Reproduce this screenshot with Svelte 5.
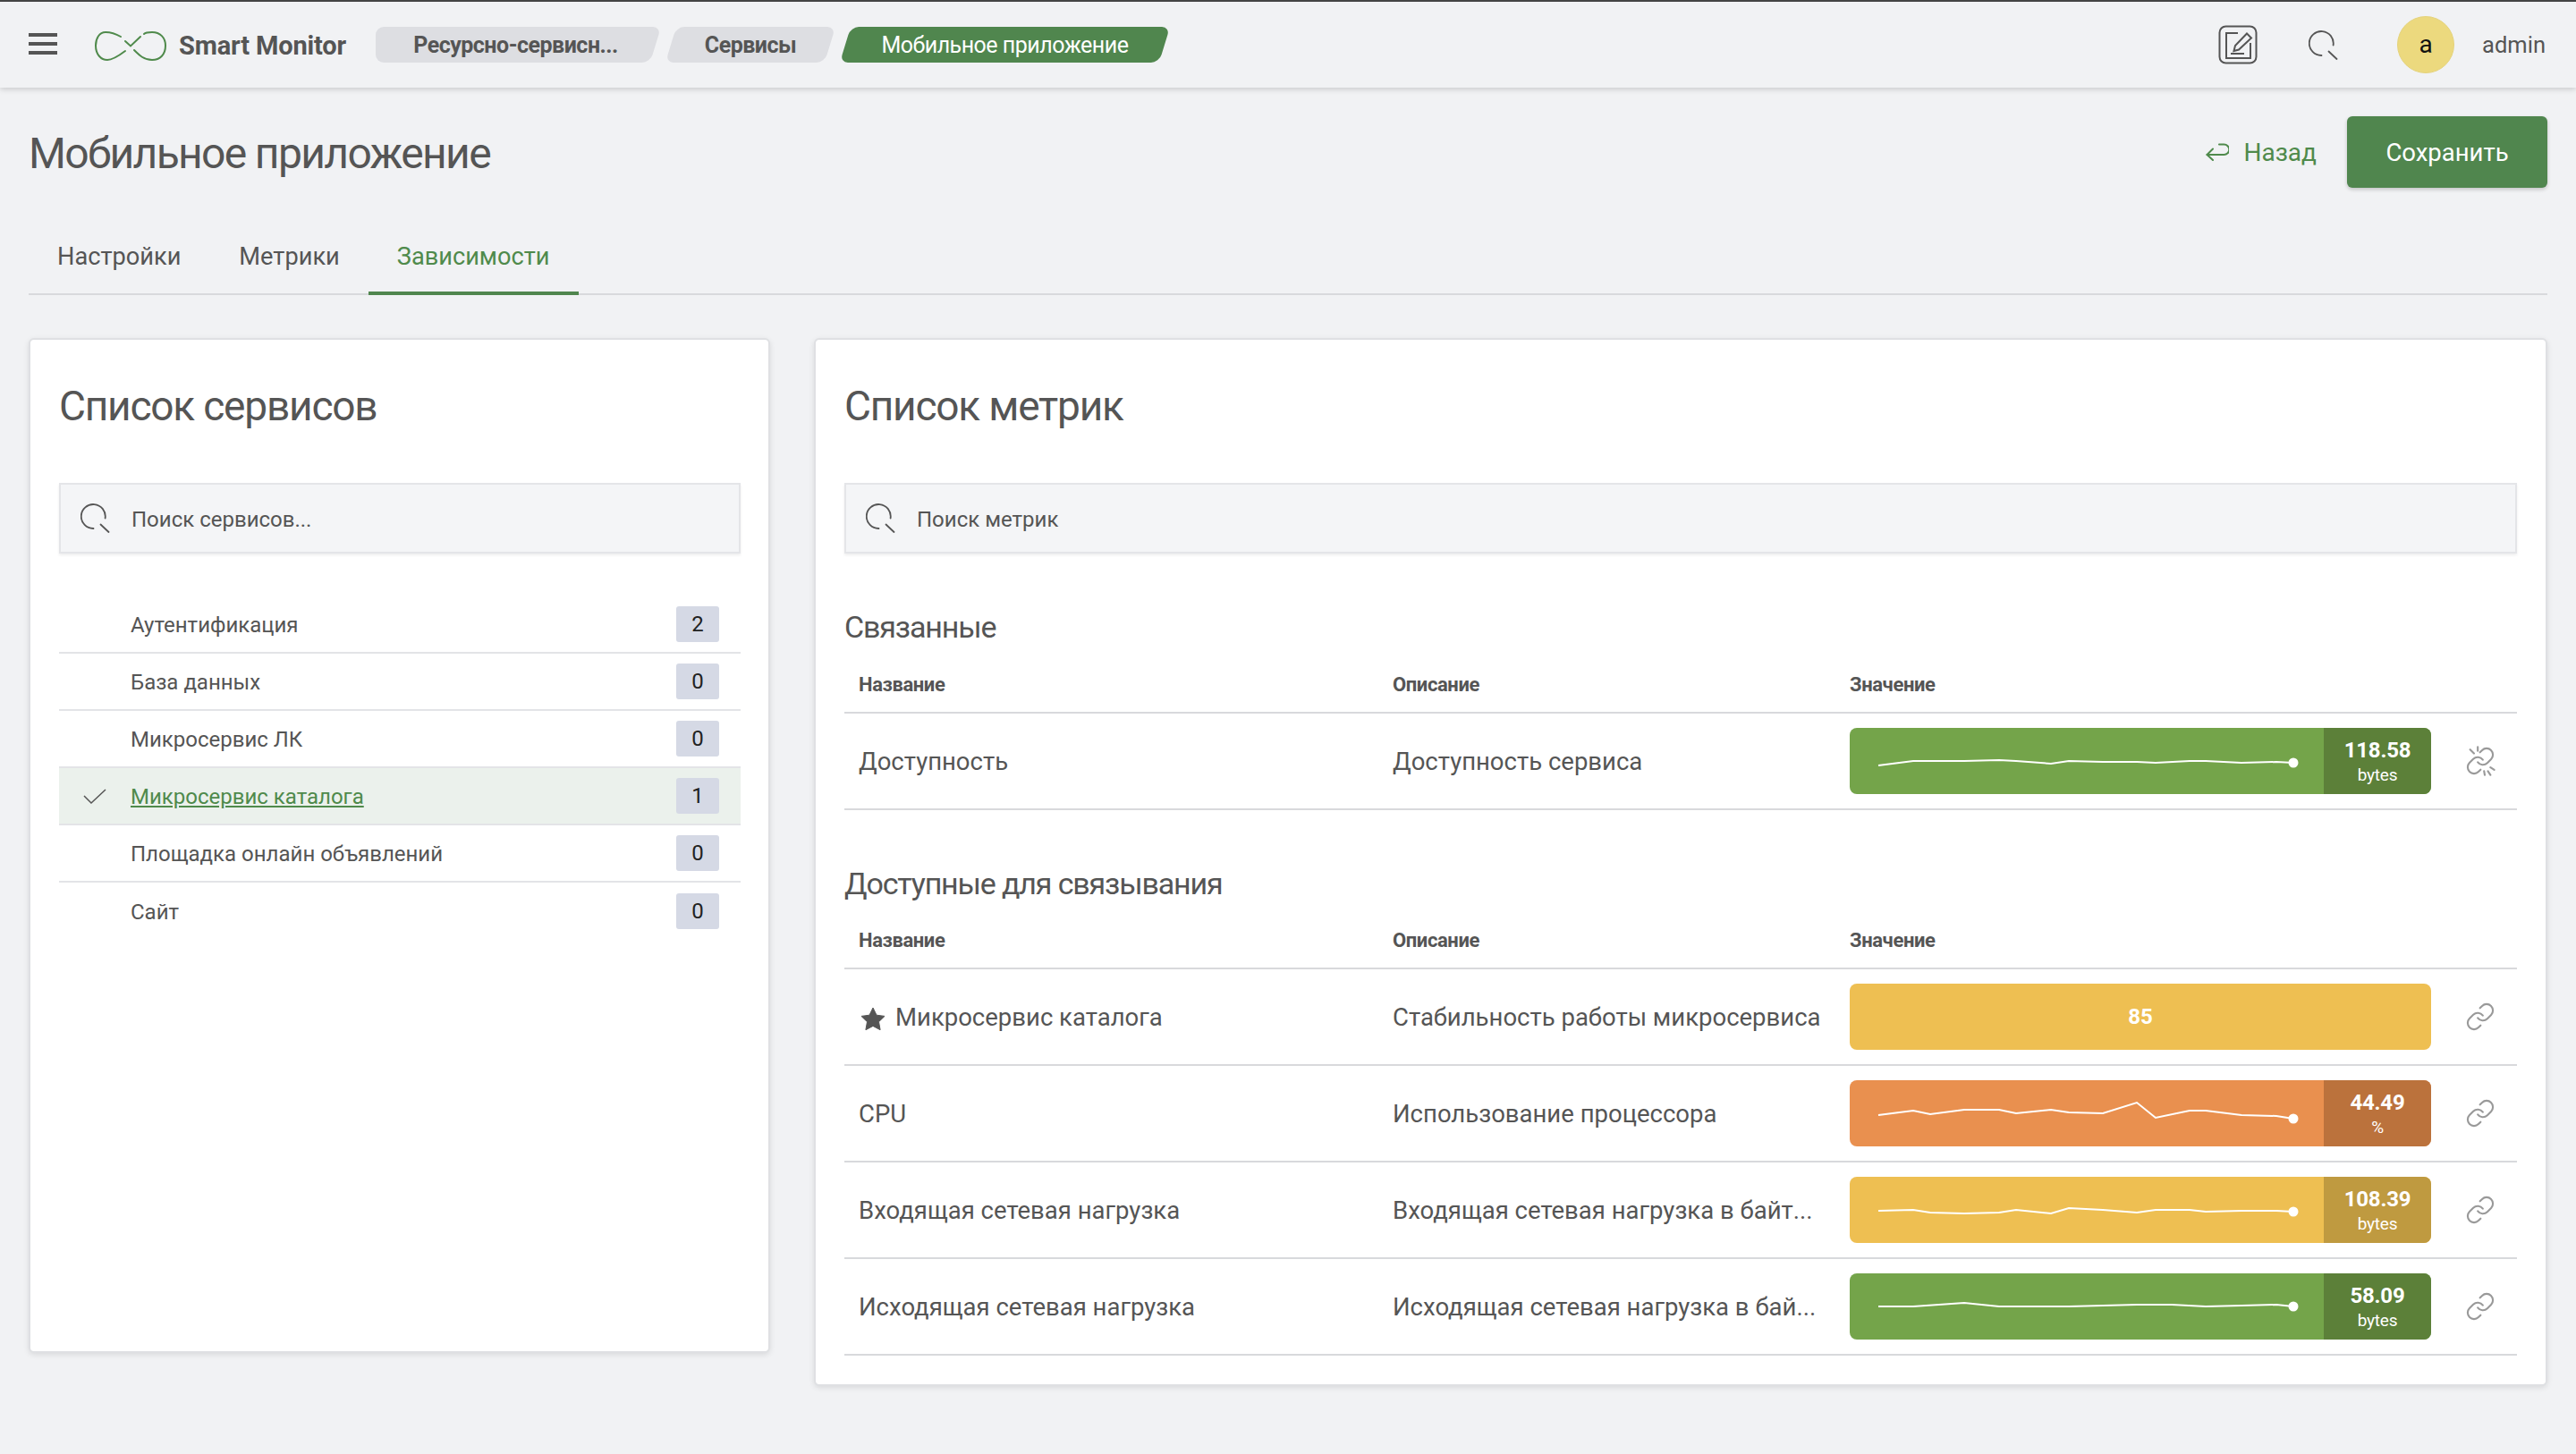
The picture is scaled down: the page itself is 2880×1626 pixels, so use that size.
<script>
  const services = [
    { name: 'Аутентификация', count: 2 },
    { name: 'База данных', count: 0 },
    { name: 'Микросервис ЛК', count: 0 },
    { name: 'Микросервис каталога', count: 1, active: true },
    { name: 'Площадка онлайн объявлений', count: 0 },
    { name: 'Сайт', count: 0 },
  ];

  // sparkline samples, measured in px from the bar's top-left corner
  const spark = (pts) => pts.map(([x, y]) => [x - 2068, y]);

  const linked = [
    {
      name: 'Доступность',
      desc: 'Доступность сервиса',
      tone: 'green',
      value: '118.58',
      unit: 'bytes',
      line: spark([[2100, 42], [2139, 37], [2158, 37], [2196, 37], [2235, 36], [2254, 37], [2293, 40], [2313, 37], [2351, 38], [2389, 38], [2410, 39], [2448, 37], [2466, 37], [2506, 39], [2545, 38], [2564, 39]]),
    },
  ];

  const available = [
    { name: 'Микросервис каталога', star: true, desc: 'Стабильность работы микросервиса', tone: 'yellow', value: '85' },
    {
      name: 'CPU',
      desc: 'Использование процессора',
      tone: 'orange',
      value: '44.49',
      unit: '%',
      line: spark([[2100, 39], [2139, 34], [2158, 38], [2196, 33], [2235, 33], [2254, 37], [2293, 33], [2313, 36], [2351, 37], [2389, 25], [2410, 42], [2448, 34], [2466, 34], [2506, 39], [2545, 40], [2564, 43]]),
    },
    {
      name: 'Входящая сетевая нагрузка',
      desc: 'Входящая сетевая нагрузка в байт...',
      tone: 'yellow',
      value: '108.39',
      unit: 'bytes',
      line: spark([[2100, 38], [2139, 37], [2158, 40], [2196, 41], [2235, 40], [2254, 37], [2293, 41], [2313, 35], [2351, 37], [2389, 40], [2410, 37], [2448, 37], [2466, 39], [2506, 38], [2545, 38], [2564, 39]]),
    },
    {
      name: 'Исходящая сетевая нагрузка',
      desc: 'Исходящая сетевая нагрузка в бай...',
      tone: 'green',
      value: '58.09',
      unit: 'bytes',
      line: spark([[2100, 37], [2139, 37], [2196, 33], [2235, 37], [2313, 37], [2389, 35], [2428, 35], [2466, 37], [2506, 36], [2545, 35], [2564, 37]]),
    },
  ];

  const points = (line) => line.map((p) => p.join(',')).join(' ');
</script>

{#snippet searchIcon(size)}
  <svg class="search-icon" width={size} height={size} viewBox="0 0 33 33" fill="none" stroke="#555" stroke-width="1.8" stroke-linecap="round">
    <path d="M27.6 16.5A13.5 13.5 0 1 0 14.5 28" />
    <path d="M22.5 23.5L31.5 32" />
  </svg>
{/snippet}

{#snippet linkIcon(broken)}
  <svg class="link-icon" width="34" height="34" viewBox="0 0 24 24" fill="none" stroke="#999" stroke-width="1.5" stroke-linecap="round" stroke-linejoin="round">
    <path d="M10 13a5 5 0 0 0 7.54.54l3-3a5 5 0 0 0-7.07-7.07l-1.72 1.71" />
    <path d="M14 11a5 5 0 0 0-7.54-.54l-3 3a5 5 0 0 0 7.07 7.07l1.71-1.71" />
    {#if broken}
      <path d="M4 3l3 3M10 1v3M20 17l3 2M15 20l.5 3M18 20l2 3" />
    {/if}
  </svg>
{/snippet}

{#snippet metricTable(rows, broken)}
  <div class="row head">
    <span>Название</span>
    <span>Описание</span>
    <span>Значение</span>
  </div>
  {#each rows as row}
    <div class="row">
      <span class="name">
        {#if row.star}
          <svg class="star" width="28" height="26" viewBox="0 0 28 26"><path d="M14 1l4 8.2 9 1.2-6.5 6.3 1.6 9L14 21.4 5.9 25.7l1.6-9L1 10.4l9-1.2z" fill="#555" stroke="#555" stroke-linejoin="round" /></svg>
        {/if}
        {row.name}
      </span>
      <span class="desc">{row.desc}</span>
      <div class="bar" data-tone={row.tone}>
        {#if row.line}
          <svg class="spark" viewBox="0 0 530 74" width="530" height="74">
            <polyline points={points(row.line)} fill="none" stroke="#fff" stroke-width="2" />
            <circle cx={row.line[row.line.length - 1][0]} cy={row.line[row.line.length - 1][1]} r="5.5" fill="#fff" />
          </svg>
          <div class="reading">
            <strong>{row.value}</strong>
            <small>{row.unit}</small>
          </div>
        {:else}
          <strong class="solo">{row.value}</strong>
        {/if}
      </div>
      <span class="action">{@render linkIcon(broken)}</span>
    </div>
  {/each}
{/snippet}

<header class="topbar">
  <button class="burger" aria-label="Меню"><i></i><i></i><i></i></button>
  <svg class="logo" width="80" height="34" viewBox="0 0 80 34" fill="none" stroke="#4f8a4b" stroke-width="2" stroke-linecap="round">
    <path d="M29 6C22 2 16 1 12 1 5 1 1 8 1 16c0 10 6 16 13 16 6 0 12-4 20-10" />
    <path d="M44 21c6 6 11 11 20 11 9 0 15-6 15-16 0-9-6-15-15-15-4 0-8 1-9 2" />
    <path d="M34 11l6 5.500L51 6" />
  </svg>
  <b class="brand">Smart Monitor</b>
  <nav class="crumbs">
    <a class="crumb first" href="#a">Ресурсно-сервисн...</a>
    <a class="crumb second" href="#b">Сервисы</a>
    <a class="crumb third current" href="#c">Мобильное приложение</a>
  </nav>
  <div class="top-actions">
    <svg width="44" height="44" viewBox="0 0 44 44" fill="none" stroke="#555" stroke-width="2">
      <rect x="1.500" y="1.500" width="41" height="41" rx="7" />
      <path d="M22 9H9v28h27V20" />
      <path d="M17.500 29l1.500-6L32 9.500l5 5L23 27.500z" />
      <path d="M14 32h15" />
    </svg>
    <span class="top-search">{@render searchIcon(33)}</span>
    <span class="avatar">a</span>
    <span class="user">admin</span>
  </div>
</header>

<main class="page">
  <div class="title-row">
    <h1>Мобильное приложение</h1>
    <a class="back" href="#back">
      <svg width="26" height="20" viewBox="0 0 26 20" fill="none" stroke="#4f8a4b" stroke-width="2" stroke-linecap="round" stroke-linejoin="round">
        <path d="M15 1.500h5.500a4.500 4.500 0 0 1 0 11.500H1.500" />
        <path d="M8 6.500L1.500 13 8 19" />
      </svg>
      Назад
    </a>
    <button class="save">Сохранить</button>
  </div>

  <div class="tabs">
    <span class="tab">Настройки</span>
    <span class="tab">Метрики</span>
    <span class="tab active">Зависимости</span>
  </div>

  <div class="columns">
    <section class="panel services">
      <h2>Список сервисов</h2>
      <div class="search">{@render searchIcon(33)}<span>Поиск сервисов...</span></div>
      <ul class="service-list">
        {#each services as service}
          <li class:active={service.active}>
            {#if service.active}
              <svg class="check" width="26" height="18" viewBox="0 0 26 18" fill="none" stroke="#555" stroke-width="1.500"><path d="M1 8l8 8L25 1" /></svg>
            {/if}
            <span>{service.name}</span>
            <em>{service.count}</em>
          </li>
        {/each}
      </ul>
    </section>

    <section class="panel metrics">
      <h2>Список метрик</h2>
      <div class="search">{@render searchIcon(33)}<span>Поиск метрик</span></div>
      <h3 class="first-group">Связанные</h3>
      {@render metricTable(linked, true)}
      <h3 class="second-group">Доступные для связывания</h3>
      {@render metricTable(available, false)}
    </section>
  </div>
</main>

<style>
  :global(body) {
    margin: 0;
    min-height: 100vh;
    background: #f1f2f4;
    color: #555;
    font-family: Roboto, 'Liberation Sans', sans-serif;
  }

  .topbar {
    height: 96px;
    box-sizing: content-box;
    border-top: 2px solid #444;
    display: flex;
    align-items: center;
    padding: 0 32px;
    background: #f1f2f4;
    box-shadow: 0 2px 6px rgba(0, 0, 0, 0.16);
    position: relative;
  }

  .burger {
    width: 32px;
    height: 24px;
    padding: 0;
    margin: -2px 42px 0 0;
    border: 0;
    background: none;
    display: flex;
    flex-direction: column;
    justify-content: space-between;
  }

  .burger i {
    height: 4px;
    background: #555;
  }

  .logo {
    margin-top: 4px;
    flex: none;
  }

  .brand {
    margin: 2px 0 0 14px;
    width: 220px;
    font-size: 29px;
    letter-spacing: -0.15px;
    white-space: nowrap;
  }

  .crumbs {
    display: flex;
    gap: 17px;
  }

  .crumb {
    position: relative;
    z-index: 0;
    height: 40px;
    line-height: 42px;
    font-size: 25px;
    font-weight: 700;
    letter-spacing: -0.5px;
    color: #555;
    text-decoration: none;
    text-align: center;
    white-space: nowrap;
  }

  .crumb::before {
    content: '';
    position: absolute;
    inset: 0;
    z-index: -1;
    background: #dddee2;
    border-radius: 9px;
    transform: skewX(-17deg);
  }

  .crumb.first {
    width: 313px;
  }

  .crumb.first::before {
    left: 20px;
  }

  .crumb.first::after {
    content: '';
    position: absolute;
    inset: 0 50% 0 0;
    z-index: -1;
    background: #dddee2;
    border-radius: 9px 0 0 9px;
  }

  .crumb.second {
    width: 178px;
  }

  .crumb.third {
    width: 357px;
    font-weight: 400;
    color: #fff;
  }

  .current::before {
    background: #50864e;
  }

  .top-actions {
    margin-left: auto;
    display: flex;
    align-items: center;
  }

  .top-search {
    display: flex;
    margin-left: 57px;
  }

  .avatar {
    width: 62px;
    height: 62px;
    margin-left: 66px;
    border: 1px solid #e5d37c;
    border-radius: 50%;
    background: #ecd97e;
    color: #111;
    font-size: 28px;
    line-height: 62px;
    text-align: center;
  }

  .user {
    margin: 0 2px 0 31px;
    font-size: 25.5px;
  }

  .page {
    padding: 32px 32px 0;
  }

  .title-row {
    display: flex;
    align-items: center;
    height: 80px;
  }

  h1 {
    margin: 0 auto 0 0;
    padding-top: 2px;
    font-size: 48px;
    font-weight: 400;
    letter-spacing: -1.65px;
  }

  .back {
    display: flex;
    align-items: center;
    gap: 16px;
    margin-right: 34px;
    font-size: 28px;
    color: #4f8a4b;
    text-decoration: none;
  }

  .save {
    width: 224px;
    height: 80px;
    border: 0;
    border-radius: 6px;
    background: #50864e;
    box-shadow: 0 2px 4px rgba(0, 0, 0, 0.2);
    color: #fff;
    font: inherit;
    font-size: 27.5px;
  }

  .tabs {
    display: flex;
    height: 72px;
    margin-top: 46px;
    border-bottom: 2px solid #d8d9dc;
  }

  .tab {
    padding: 0 32px;
    height: 72px;
    line-height: 62px;
    font-size: 27.2px;
  }

  .tab:nth-child(2) {
    padding-left: 33px;
  }

  .tab.active {
    height: 74px;
    box-sizing: border-box;
    border-bottom: 4px solid #50864e;
    color: #4f8a4b;
  }

  .columns {
    display: grid;
    grid-template-columns: 829px 1938px;
    gap: 49px;
    align-items: start;
    margin-top: 48px;
  }

  .panel {
    box-sizing: border-box;
    border: 2px solid #dfe0e3;
    border-radius: 6px;
    padding: 0 32px 32px;
    background: #fff;
    box-shadow: 0 2px 6px rgba(0, 0, 0, 0.1);
  }

  .services {
    height: 1135px;
    padding-right: 31px;
  }

  h2 {
    margin: 0;
    padding-top: 44px;
    font-size: 46px;
    line-height: 60px;
    font-weight: 400;
    letter-spacing: -1.2px;
  }

  .search {
    height: 79px;
    box-sizing: border-box;
    margin-top: 56px;
    display: flex;
    align-items: center;
    gap: 24px;
    padding-left: 22px;
    border: 2px solid #e4e5e8;
    background: #f4f5f7;
    box-shadow: 0 2px 3px rgba(0, 0, 0, 0.07);
    font-size: 24px;
  }

  .search span {
    padding-top: 2px;
  }

  .service-list {
    list-style: none;
    margin: 48px 0 0;
    padding: 0;
    font-size: 24px;
  }

  .service-list li {
    height: 64px;
    box-sizing: border-box;
    position: relative;
    display: flex;
    align-items: center;
    padding: 0 24px 0 80px;
    border-bottom: 2px solid #e3e4e7;
  }

  .service-list li span {
    padding-top: 2px;
  }

  .service-list li:last-child {
    border-bottom: 0;
  }

  .service-list li.active {
    background: #ebf1ec;
  }

  .service-list li.active span {
    color: #4f8a4b;
    text-decoration: underline;
  }

  .check {
    position: absolute;
    left: 27px;
    top: 23px;
  }

  .service-list em {
    width: 48px;
    height: 40px;
    margin-left: auto;
    border-radius: 3px;
    background: #d5d9e5;
    color: #222;
    font-size: 24px;
    font-style: normal;
    line-height: 40px;
    text-align: center;
  }

  h3 {
    margin: 0;
    font-size: 34px;
    line-height: 44px;
    font-weight: 400;
    letter-spacing: -1.15px;
  }

  .first-group {
    margin-top: 60px;
    margin-bottom: 1px;
  }

  .second-group {
    margin-top: 60px;
  }

  .row {
    height: 108px;
    box-sizing: border-box;
    display: grid;
    grid-template-columns: 597px 511px 650px 1fr;
    align-items: center;
    padding-left: 16px;
    border-bottom: 2px solid #d8d9dc;
    font-size: 27.5px;
    white-space: nowrap;
  }

  .row.head {
    height: 74px;
    padding-top: 10px;
    font-size: 22px;
    font-weight: 700;
    letter-spacing: -0.4px;
  }

  .name {
    display: flex;
    align-items: center;
    gap: 11px;
  }

  .star {
    margin: 3px 0 0 2px;
  }

  .bar {
    height: 74px;
    display: flex;
    justify-content: space-between;
    border-radius: 8px;
    overflow: hidden;
    color: #fff;
  }

  .bar[data-tone='green'] {
    background: #74a44a;
    --dark: #5c8039;
  }

  .bar[data-tone='yellow'] {
    background: #eebf52;
    --dark: #bf9a40;
  }

  .bar[data-tone='orange'] {
    background: #e9904f;
    --dark: #bb723c;
  }

  .spark {
    flex: none;
  }

  .solo {
    width: 100%;
    font-size: 24px;
    line-height: 74px;
    text-align: center;
  }

  .reading {
    width: 120px;
    display: flex;
    flex-direction: column;
    align-items: center;
    background: var(--dark);
  }

  .reading strong {
    margin-top: 10px;
    font-size: 24px;
    line-height: 30px;
    letter-spacing: -0.2px;
  }

  .reading small {
    margin-top: 1px;
    font-size: 19px;
    line-height: 24px;
    letter-spacing: -0.2px;
  }

  .action {
    display: flex;
    justify-content: center;
    margin-left: 32px;
    width: 46px;
  }
</style>
